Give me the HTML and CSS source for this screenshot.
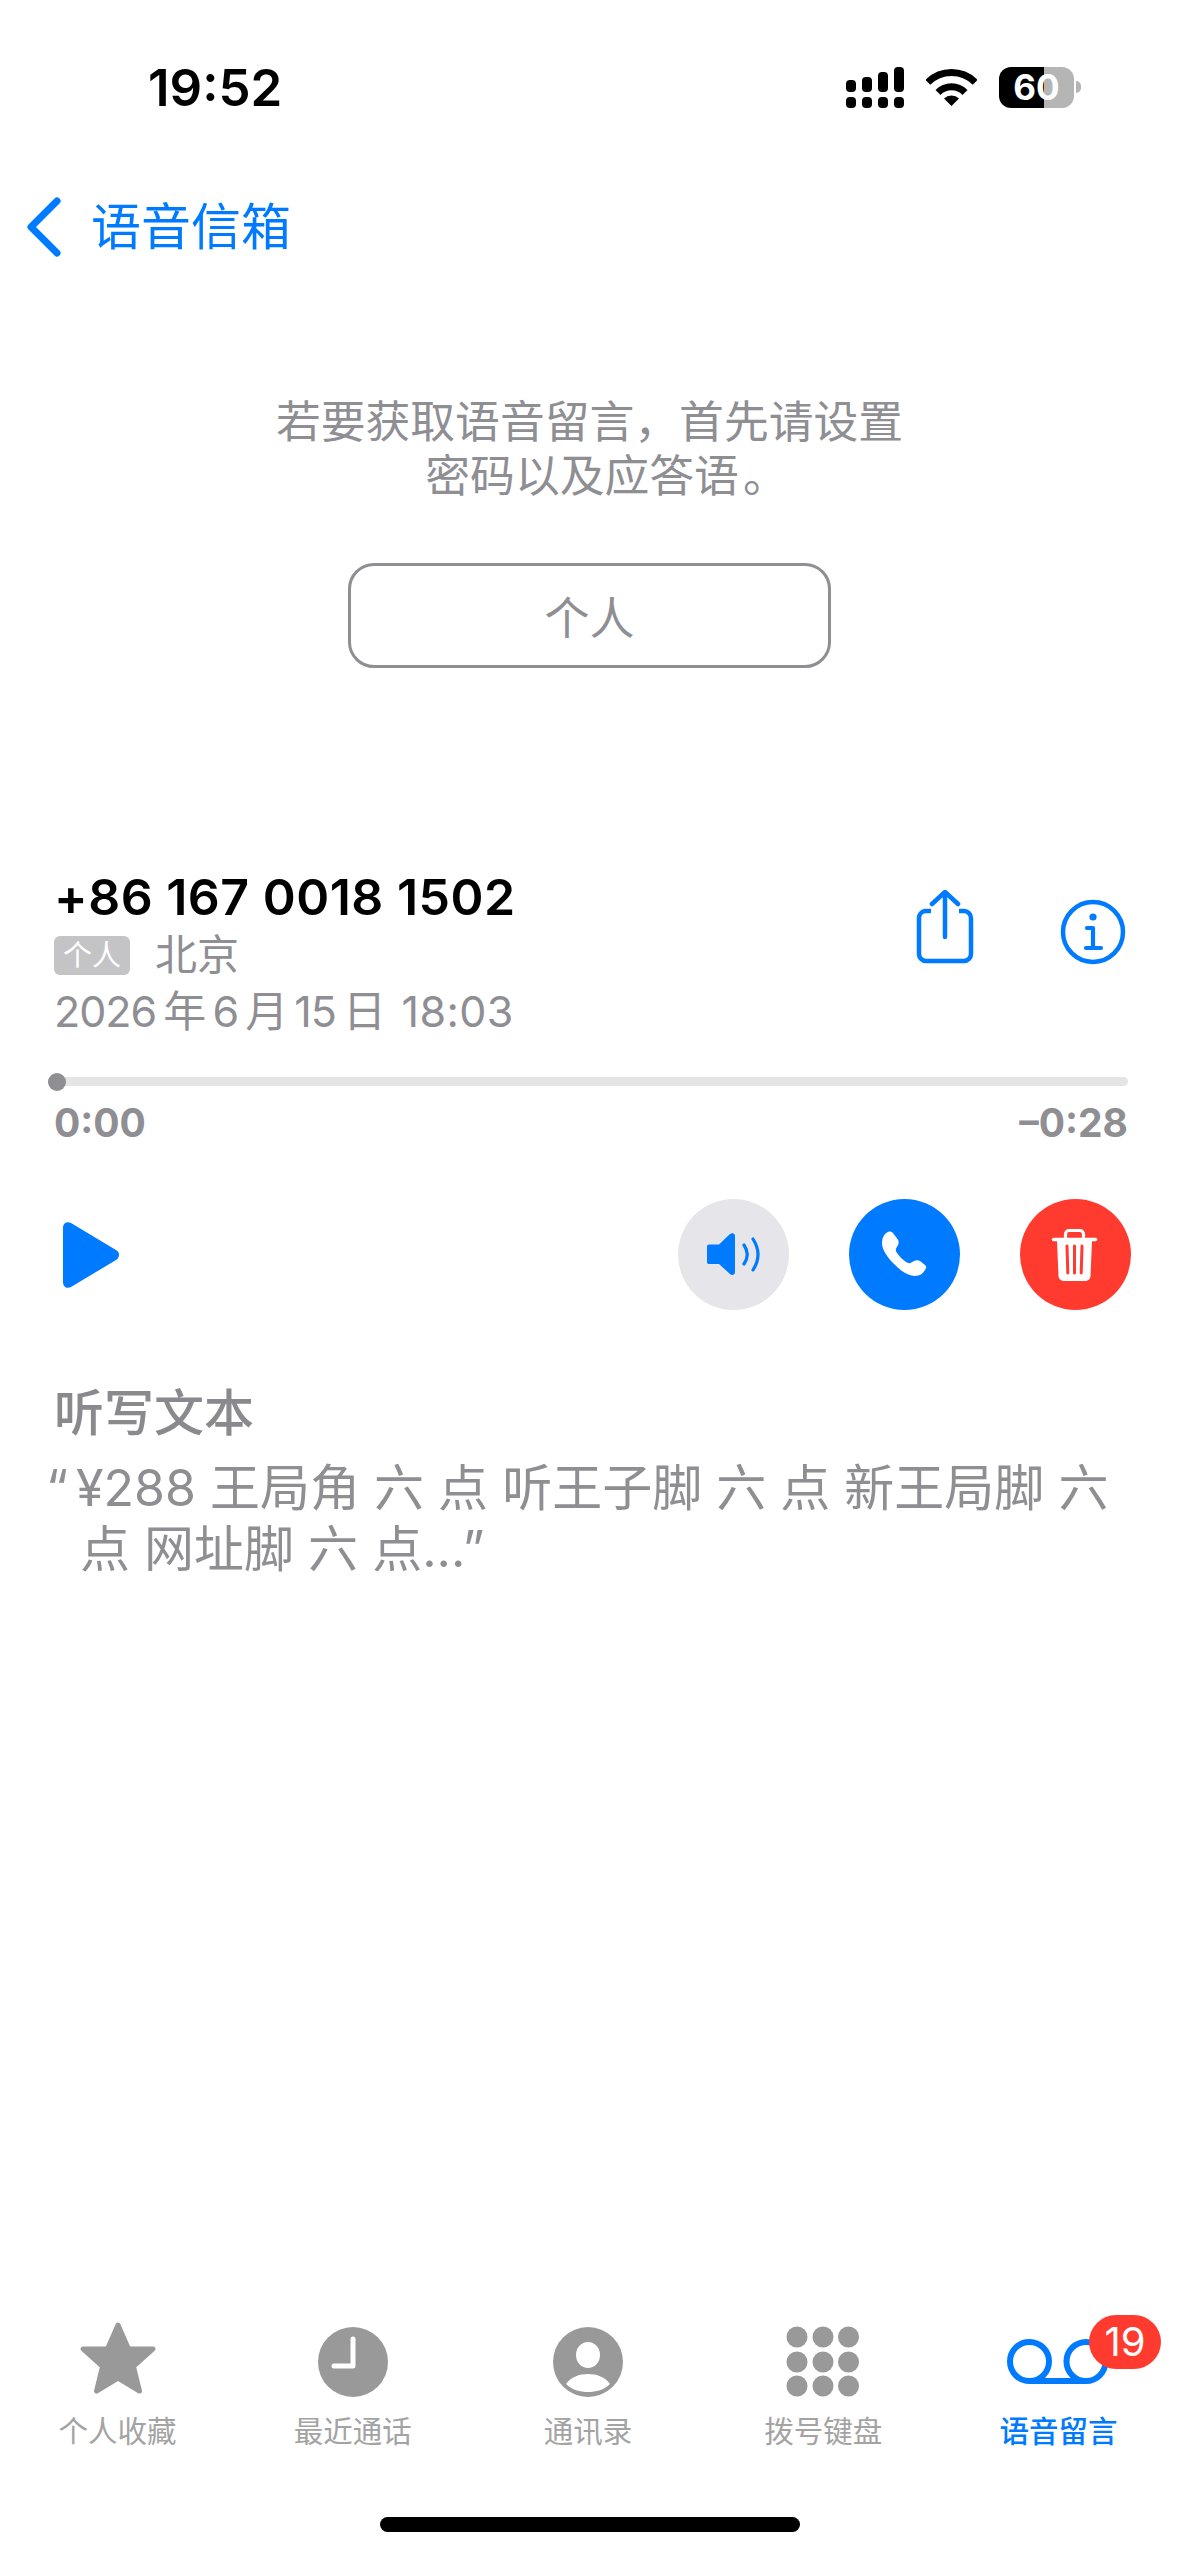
FILE: index.html
```html
<!DOCTYPE html>
<html lang="zh-CN">
<head>
<meta charset="utf-8">
<title>语音信箱</title>
<link rel="stylesheet" href="styles.css">
</head>
<body>
<div class="page">
  <header class="status">
    <span class="clock-text">19:52</span>
    <div class="status-icons">
      <svg class="signal" width="58" height="41" viewBox="0 0 58 41">
        <g fill="#000">
          <rect x="0" y="13" width="10" height="12" rx="4"/><rect x="16" y="10" width="10" height="15" rx="4"/><rect x="32" y="5" width="10" height="20" rx="4"/><rect x="48" y="0" width="10" height="25" rx="4"/>
          <rect x="0" y="30" width="10" height="11" rx="4"/><rect x="16" y="30" width="10" height="11" rx="4"/><rect x="32" y="30" width="10" height="11" rx="4"/><rect x="48" y="30" width="10" height="11" rx="4"/>
        </g>
      </svg>
      <svg class="wifi" width="51" height="38" viewBox="0 0 51 38">
        <path d="M1.8 14.3A33.5 33.5 0 0 1 49.2 14.3M12 24.5A19 19 0 0 1 39 24.5" fill="none" stroke="#000" stroke-width="7"/>
        <path d="M25.5 38L18 30.5A10.7 10.7 0 0 1 33 30.5Z" fill="#000"/>
      </svg>
      <div class="battery"><span class="battery-level">60</span><span class="battery-nub"></span></div>
    </div>
  </header>

  <nav class="nav">
    <svg class="back-icon" width="36" height="62" viewBox="0 0 36 62"><path d="M31 5L5 31L31 57" fill="none" stroke="#007aff" stroke-width="7" stroke-linecap="round" stroke-linejoin="round"/></svg>
    <span class="nav-title">语音信箱</span>
  </nav>

  <section class="prompt">
    <p class="prompt-text">若要获取语音留言，首先请设置<br>密码以及应答语<span class="end-punct">。</span></p>
    <div class="prompt-button">个人</div>
  </section>

  <section class="message">
    <div class="message-head">
      <div class="message-info">
        <div class="number">+86 167 0018 1502</div>
        <div class="origin"><span class="tag">个人</span><span class="place">北京</span></div>
        <div class="date">2026 年 6 月 15 日&ensp;<span class="date-time">18:03</span></div>
      </div>
      <div class="head-actions">
        <svg width="60" height="76" viewBox="0 0 60 76">
          <path d="M16 22H10A7 7 0 0 0 4 29V65A7 7 0 0 0 11 72H49A7 7 0 0 0 56 65V29A7 7 0 0 0 49 22H44" fill="none" stroke="#007aff" stroke-width="4.5"/>
          <path d="M30 48V4M17 15L30 3L43 15" fill="none" stroke="#007aff" stroke-width="4.5" stroke-linecap="round" stroke-linejoin="round"/>
        </svg>
        <svg width="66" height="66" viewBox="0 0 66 66">
          <circle cx="33" cy="33" r="30" fill="none" stroke="#007aff" stroke-width="4.5"/>
          <circle cx="33" cy="18" r="3.6" fill="#007aff"/>
          <path d="M27 29H33V49M26 49H41" fill="none" stroke="#007aff" stroke-width="4.2" stroke-linecap="round" stroke-linejoin="round"/>
        </svg>
      </div>
    </div>

    <div class="track"><span class="thumb"></span></div>
    <div class="times"><span>0:00</span><span>–0:28</span></div>

    <div class="controls">
      <svg class="play" width="56" height="66" viewBox="0 0 56 66"><path d="M0 6C0 1 4 -1 8 1L53 28C57 30 57 35 53 38L8 65C4 67 0 65 0 60Z" fill="#007aff"/></svg>
      <div class="round-group">
        <div class="round round-gray">
          <svg width="111" height="111" viewBox="0 0 111 111">
            <path d="M31 45.5H41L52 35C54 33.5 57 34 57 37V73C57 76 54 77 52 75L41 65H31C29.5 65 29 64 29 63V48C29 46.5 29.5 45.5 31 45.5Z" fill="#007aff"/>
            <path d="M66 46Q72.5 55.5 66 65M75 40Q85 55.5 75 71" fill="none" stroke="#007aff" stroke-width="3.2" stroke-linecap="round"/>
          </svg>
        </div>
        <div class="round round-blue">
          <svg width="111" height="111" viewBox="0 0 111 111">
            <path d="M39 33C41 32 43 33 44 34L48.5 40C50 42 50 44 49 46L47 49.5C46.5 51 47 52.5 48 54C50.5 57.5 53.5 60.5 57 63C58.5 64 60 64.5 61.5 64L65 62C67 61 69 61 71 62L76 66C77.5 67 77.5 68.5 76.5 70C74.5 74.5 71 77 66 77C59 77 52 72 45.5 65.5C39 59 33 51 33 44C33 39 35 35 39 33Z" fill="#fff"/>
          </svg>
        </div>
        <div class="round round-red">
          <svg width="111" height="111" viewBox="0 0 111 111">
            <path d="M45.5 40V35A3.5 3.5 0 0 1 49 31.5H60A3.5 3.5 0 0 1 63.5 35V40" fill="none" stroke="#fff" stroke-width="3.2"/>
            <path d="M33.5 40.5H75.5" stroke="#fff" stroke-width="3.4" stroke-linecap="round"/>
            <path d="M37 42H72L70.5 77A5 5 0 0 1 65.5 82H43.500A5 5 0 0 1 38.500 77Z" fill="#fff"/>
            <path d="M47 47L47.800 74M54.500 47V74M62 47L61.200 74" stroke="#ff3b30" stroke-width="3" stroke-linecap="round"/>
          </svg>
        </div>
      </div>
    </div>

    <h2 class="dictation-title">听写文本</h2>
    <p class="dictation"><span class="open-quote">“</span>¥288 王局角 六 点 听王子脚 六 点 新王局脚 六 点 网址脚 六 点...”</p>
  </section>

  <footer class="tabbar">
    <div class="tabs">
      <div class="tab">
        <svg class="tab-icon" width="80" height="80" viewBox="0 0 80 80"><path d="M40 6L50.500 30H75L55.500 47.500L61.500 72L40 59L18.500 72L24.500 47.500L5 30H29.500Z" fill="#999" stroke="#999" stroke-width="5" stroke-linejoin="round"/></svg>
        <span class="tab-label">个人收藏</span>
      </div>
      <div class="tab">
        <svg class="tab-icon" width="80" height="80" viewBox="0 0 80 80"><circle cx="40" cy="43" r="35" fill="#999"/><path d="M40 20V47H21" fill="none" stroke="#fff" stroke-width="5" stroke-linecap="round" stroke-linejoin="round"/></svg>
        <span class="tab-label">最近通话</span>
      </div>
      <div class="tab">
        <svg class="tab-icon" width="80" height="80" viewBox="0 0 80 80"><circle cx="40" cy="43" r="35" fill="#999"/><ellipse cx="40" cy="36" rx="12" ry="13" fill="#fff"/><path d="M18 65C23 58 31 55 40 55C49 55 57 58 62 65C56 71 48 73 40 73C32 73 24 71 18 65Z" fill="#fff"/></svg>
        <span class="tab-label">通讯录</span>
      </div>
      <div class="tab">
        <svg class="tab-icon" width="80" height="80" viewBox="0 0 80 80"><g fill="#999"><circle cx="14" cy="18" r="10.500"/><circle cx="40" cy="18" r="10.500"/><circle cx="65.500" cy="18" r="10.500"/><circle cx="14" cy="43" r="10.500"/><circle cx="40" cy="43" r="10.500"/><circle cx="65.500" cy="43" r="10.500"/><circle cx="14" cy="67" r="10.500"/><circle cx="40" cy="67" r="10.500"/><circle cx="65.500" cy="67" r="10.500"/></g></svg>
        <span class="tab-label">拨号键盘</span>
      </div>
      <div class="tab tab-active">
        <svg class="tab-icon" width="102" height="80" viewBox="0 0 102 80"><g fill="none" stroke="#007aff" stroke-width="6"><circle cx="22.500" cy="42.500" r="19.500"/><circle cx="79" cy="42.500" r="19.500"/><path d="M22.500 62H79"/></g></svg>
        <span class="tab-label">语音留言</span>
        <span class="badge">19</span>
      </div>
    </div>
    <div class="home-indicator"></div>
  </footer>
</div>
</body>
</html>
```
FILE: styles.css
```css
* { box-sizing: border-box; }
html, body { margin: 0; padding: 0; background: #fff; }
body {
  font-family: Inter, "Noto Sans CJK SC", "Noto Sans", sans-serif;
  color: #000;
}
.page {
  width: 1179px;
  height: 2556px;
  display: flex;
  flex-direction: column;
  overflow: hidden;
}

/* status bar */
.status {
  height: 180px;
  padding: 67px 105px 0 148px;
  display: flex;
  justify-content: space-between;
  align-items: flex-start;
}
.clock-text {
  font-size: 51px;
  line-height: 41px;
  font-weight: 600;
}
.status-icons { display: flex; align-items: flex-start; gap: 22px; }
.wifi { margin-top: 1px; }
.battery {
  position: relative;
  width: 75px;
  height: 41px;
  border-radius: 12px;
  background: linear-gradient(to right, #000 60%, #b5b5b5 60%);
  display: flex;
  align-items: center;
  justify-content: center;
}
.battery-level {
  color: #fff;
  font-size: 35px;
  font-weight: 700;
  line-height: 41px;
}
.battery-nub {
  position: absolute;
  left: 77px;
  top: 14px;
  width: 5px;
  height: 12px;
  border-radius: 0 6px 6px 0;
  background: #b5b5b5;
}

/* nav */
.nav {
  height: 94px;
  padding-left: 26px;
  display: flex;
  align-items: center;
  gap: 29px;
}
.nav-title { font-size: 50px; line-height: 62px; color: #007aff; }

/* voicemail setup prompt */
.prompt {
  padding-top: 121px;
  display: flex;
  flex-direction: column;
  align-items: center;
}
.prompt-text {
  margin: 0;
  text-align: center;
  font-size: 44.800px;
  line-height: 54px;
  color: #8e8e93;
}
.end-punct { margin-left: 4px; margin-right: -34px; }
.prompt-button {
  margin-top: 60px;
  width: 483px;
  height: 105px;
  border: 3px solid #8e8e93;
  border-radius: 26px;
  display: flex;
  align-items: center;
  justify-content: center;
  padding-bottom: 1px;
  font-size: 45px;
  color: #8e8e93;
}

/* message */
.message {
  padding: 199px 51px 0 54px;
  display: flex;
  flex-direction: column;
}
.message-head { display: flex; justify-content: space-between; align-items: flex-start; }
.number {
  font-size: 50px;
  line-height: 60px;
  font-weight: 600;
  letter-spacing: 0.5px;
}
.origin { height: 48px; margin-top: 4px; display: flex; align-items: center; gap: 25px; }
.tag {
  width: 76px;
  height: 39px;
  border-radius: 6px;
  background: #c4c4c6;
  color: #fff;
  font-size: 29px;
  line-height: 39px;
  text-align: center;
}
.place { font-size: 42px; line-height: 48px; color: #8e8e93; }
.date {
  margin-top: 4px;
  font-size: 43px;
  line-height: 56px;
  letter-spacing: -1px;
  word-spacing: -4px;
  color: #8e8e93;
}
.date-time { margin-left: -4px; letter-spacing: 0.4px; }
.head-actions {
  margin-top: 22px;
  display: flex;
  align-items: flex-end;
  gap: 85px;
  margin-right: 2px;
}
.head-actions svg { display: block; }
.track {
  position: relative;
  height: 9px;
  margin: 38px 0 0 -6px;
  border-radius: 5px;
  background: #e5e5e5;
}
.thumb {
  position: absolute;
  left: 0;
  top: -4px;
  width: 18px;
  height: 18px;
  border-radius: 50%;
  background: #8e8e93;
}
.times {
  margin-top: 14px;
  display: flex;
  justify-content: space-between;
  font-size: 39px;
  line-height: 46px;
  font-weight: 700;
  color: #8e8e93;
}
.controls {
  margin-top: 53px;
  margin-right: -3px;
  padding-left: 9px;
  display: flex;
  align-items: center;
  justify-content: space-between;
}
.play { display: block; }
.round-group { display: flex; gap: 60px; }
.round {
  width: 111px;
  height: 111px;
  border-radius: 50%;
}
.round svg { display: block; }
.round-gray { background: #e5e5ea; }
.round-blue { background: #007aff; }
.round-red { background: #ff3b30; }
.dictation-title {
  margin: 73px 0 0;
  font-size: 50px;
  line-height: 60px;
  font-weight: 500;
  color: #8a8a8e;
}
.dictation {
  margin: 15px 0 0;
  padding-left: 26px;
  text-indent: -34px;
  font-size: 50px;
  line-height: 61px;
  color: #8e8e93;
}
.open-quote { margin-right: 8px; }

/* tab bar */
.tabbar {
  margin-top: auto;
  display: flex;
  flex-direction: column;
  align-items: center;
}
.tabs {
  width: 100%;
  padding-right: 3px;
  display: grid;
  grid-template-columns: repeat(5, 1fr);
}
.tab {
  position: relative;
  display: flex;
  flex-direction: column;
  align-items: center;
}
.tab-icon { display: block; }
.tab-label {
  margin-top: 15px;
  font-size: 29.500px;
  line-height: 34px;
  color: #a3a3a3;
}
.tab-active .tab-label { color: #007aff; font-weight: 500; }
.badge {
  position: absolute;
  right: 15px;
  top: -4px;
  width: 72px;
  height: 54px;
  border-radius: 27px;
  background: #ff3b30;
  color: #fff;
  font-size: 40px;
  line-height: 54px;
  text-align: center;
}
.home-indicator {
  width: 420px;
  height: 15px;
  margin: 69px 0 24px;
  border-radius: 8px;
  background: #000;
}
```
